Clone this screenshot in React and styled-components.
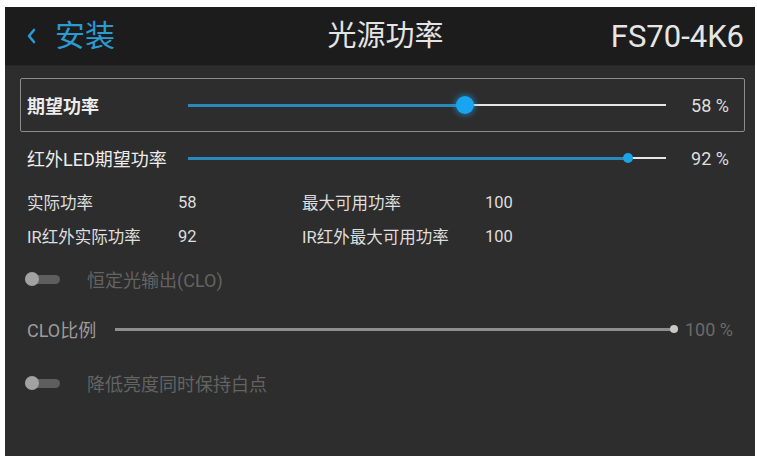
import React from "react";
import styled, { createGlobalStyle } from "styled-components";

const Global = createGlobalStyle`
  html, body { margin: 0; padding: 0; background: #ffffff; }
  body {
    width: 757px;
    height: 456px;
    overflow: hidden;
    font-family: Roboto, "Noto Sans CJK SC", "Noto Sans", sans-serif;
  }
`;

const Frame = styled.div`
  box-sizing: border-box;
  width: 757px;
  height: 456px;
  padding: 7px 2px 0 5px;
  background: #ffffff;
`;

const Screen = styled.div`
  width: 100%;
  height: 100%;
  background: #2d2d2d;
  display: flex;
  flex-direction: column;
  overflow: hidden;
`;

const Header = styled.header`
  height: 58px;
  flex: none;
  background: #1c1c1c;
  display: grid;
  grid-template-columns: 1fr auto 1fr;
  align-items: center;
  padding: 0 11px 0 22px;
  border-bottom: 1px solid #262626;
`;

const Back = styled.div`
  display: flex;
  align-items: center;
  gap: 19px;
  color: #2a9bd3;
  font-size: 30px;
  line-height: 1;
`;

const Title = styled.div`
  color: #e4e4e4;
  font-size: 29px;
  line-height: 1;
`;

const Model = styled.div`
  justify-self: end;
  color: #e6e6e6;
  font-size: 31px;
  line-height: 1;
`;

const Body = styled.main`
  flex: 1;
  display: flex;
  flex-direction: column;
  padding: 12px 10px 0 15px;
`;

const SliderRow = styled.div`
  display: grid;
  grid-template-columns: 161px 1fr 78px;
  align-items: center;
  height: ${(p) => p.$h}px;
  box-sizing: border-box;
  border: 1px solid ${(p) => (p.$framed ? "#8c8c8c" : "transparent")};
  border-radius: 2px;
  padding-left: 6px;
`;

const Label = styled.span`
  font-size: 18px;
  color: ${(p) => p.$color || "#ececec"};
  white-space: nowrap;
  font-weight: ${(p) => (p.$bold ? 700 : 400)};
`;

const Track = styled.div`
  position: relative;
  height: 12px;
  display: flex;
  align-items: center;
`;

const Filled = styled.div`
  height: 3px;
  background: ${(p) => p.$color};
  flex: none;
`;

const Rest = styled.div`
  height: 2px;
  flex: 1;
  background: ${(p) => p.$color};
`;

const Thumb = styled.div`
  position: absolute;
  top: 50%;
  width: ${(p) => p.$size}px;
  height: ${(p) => p.$size}px;
  margin-left: ${(p) => -p.$size / 2}px;
  margin-top: ${(p) => -p.$size / 2}px;
  border-radius: 50%;
  background: ${(p) => p.$color};
  box-shadow: ${(p) => (p.$glow ? "0 0 5px 2px rgba(30,160,230,0.45)" : "none")};
`;

const Value = styled.span`
  justify-self: end;
  padding-right: 15px;
  font-size: 18px;
  color: #dedede;
  white-space: nowrap;
`;

const DimValue = styled.span`
  justify-self: start;
  padding-left: 11px;
  font-size: 18px;
  color: #6a6a6a;
  white-space: nowrap;
`;

const InfoGrid = styled.div`
  display: grid;
  grid-template-columns: 151px 124px 183px auto;
  grid-auto-rows: 34px;
  align-items: center;
  padding-left: 7px;
  font-size: 16.5px;
  color: #dedede;
  margin-top: 1px;
`;

const ToggleRow = styled.div`
  height: 52px;
  display: flex;
  align-items: center;
  gap: 27px;
  padding-left: 5px;
  margin-top: ${(p) => p.$mt || 0}px;
`;

const Switch = styled.div`
  position: relative;
  width: 35px;
  height: 14px;
  display: flex;
  align-items: center;
`;

const SwitchTrack = styled.div`
  width: 100%;
  height: 9px;
  border-radius: 5px;
  background: #5e5e5e;
`;

const SwitchKnob = styled.div`
  position: absolute;
  left: 0;
  top: 0;
  width: 14px;
  height: 14px;
  border-radius: 50%;
  background: #a2a2a2;
`;

const CloRow = styled.div`
  height: 48px;
  display: grid;
  grid-template-columns: 88px 1fr 71px;
  align-items: center;
  padding-left: 7px;
`;

function Slider({ value, fill, rest, thumbColor, thumbSize, glow }) {
  return (
    <Track>
      <Filled $color={fill} style={{ width: `${value}%` }} />
      <Rest $color={rest} />
      <Thumb
        $color={thumbColor}
        $size={thumbSize}
        $glow={glow}
        style={{ left: `${value}%` }}
      />
    </Track>
  );
}

function Toggle() {
  return (
    <Switch>
      <SwitchTrack />
      <SwitchKnob />
    </Switch>
  );
}

export default function App() {
  return (
    <>
      <Global />
      <Frame>
        <Screen>
          <Header>
            <Back>
              <svg width="9" height="16" viewBox="0 0 9 16">
                <path
                  d="M7 2 L2 8 L7 14"
                  fill="none"
                  stroke="#2a9bd3"
                  strokeWidth="2.6"
                  strokeLinecap="round"
                  strokeLinejoin="round"
                />
              </svg>
              <span>安装</span>
            </Back>
            <Title>光源功率</Title>
            <Model>FS70-4K6</Model>
          </Header>

          <Body>
            <SliderRow $framed $h={54}>
              <Label $bold>期望功率</Label>
              <Slider
                value={58}
                fill="#2a88bd"
                rest="#e6e6e6"
                thumbColor="#18a4ee"
                thumbSize={18}
                glow
              />
              <Value>58 %</Value>
            </SliderRow>

            <SliderRow $h={52}>
              <Label>红外LED期望功率</Label>
              <Slider
                value={92}
                fill="#2a88bd"
                rest="#e6e6e6"
                thumbColor="#1ea2e6"
                thumbSize={10}
              />
              <Value>92 %</Value>
            </SliderRow>

            <InfoGrid>
              <span>实际功率</span>
              <span>58</span>
              <span>最大可用功率</span>
              <span>100</span>
              <span>IR红外实际功率</span>
              <span>92</span>
              <span>IR红外最大可用功率</span>
              <span>100</span>
            </InfoGrid>

            <ToggleRow>
              <Toggle />
              <Label $color="#636363">恒定光输出(CLO)</Label>
            </ToggleRow>

            <CloRow>
              <Label $color="#9c9c9c">CLO比例</Label>
              <Slider
                value={100}
                fill="#8e8e8e"
                rest="#8e8e8e"
                thumbColor="#c8c8c8"
                thumbSize={8}
              />
              <DimValue>100 %</DimValue>
            </CloRow>

            <ToggleRow $mt={4}>
              <Toggle />
              <Label $color="#636363">降低亮度同时保持白点</Label>
            </ToggleRow>
          </Body>
        </Screen>
      </Frame>
    </>
  );
}
